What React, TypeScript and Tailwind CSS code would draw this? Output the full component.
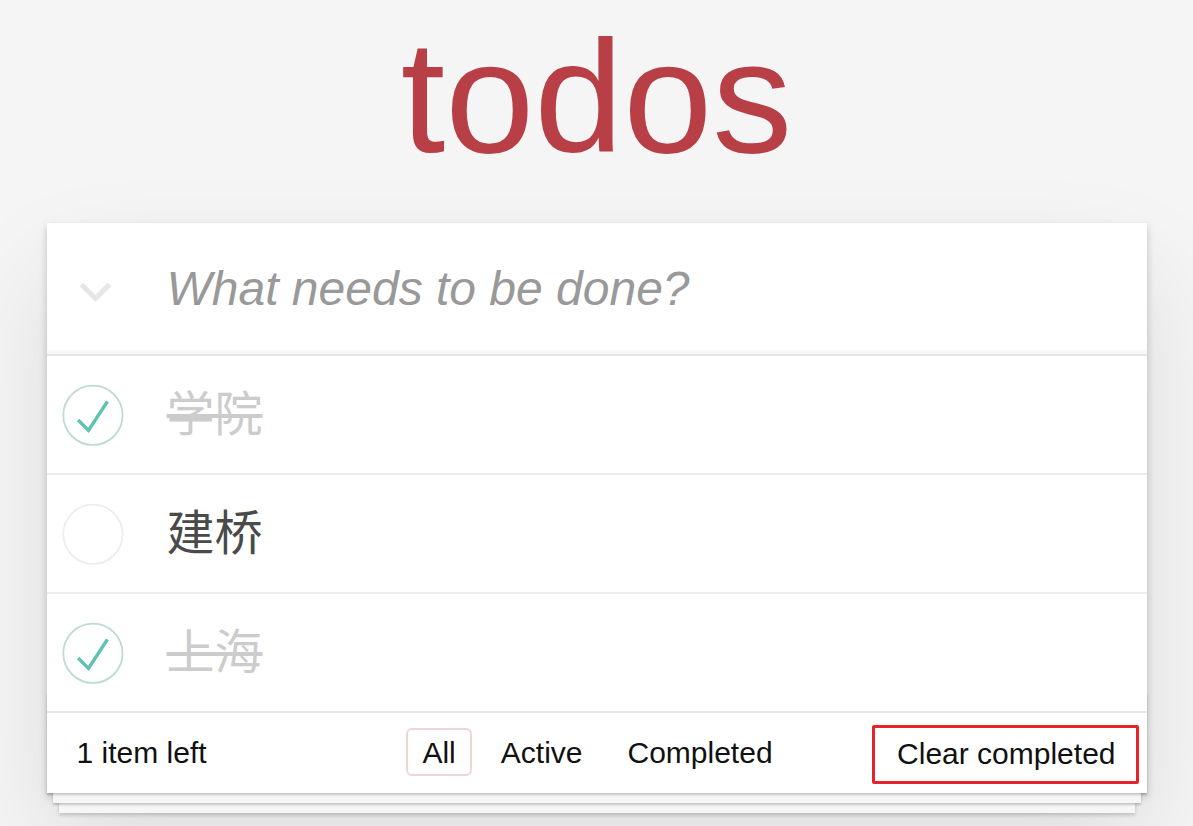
import { useState } from 'react'

type Todo = { id: number; title: string; completed: boolean }

const initialTodos: Todo[] = [
  { id: 1, title: '学院', completed: true },
  { id: 2, title: '建桥', completed: false },
  { id: 3, title: '上海', completed: true },
]

function Toggle({ done }: { done: boolean }) {
  return (
    <svg width="80" height="80" viewBox="-10 -18 100 135" className="shrink-0">
      <circle cx="50" cy="50" r="50" fill="none" stroke={done ? '#bddad5' : '#ededed'} strokeWidth="3" />
      {done && <path fill="#5dc2af" d="M72 25L42 71 27 56l-4 4 20 20 34-52z" />}
    </svg>
  )
}

export default function App() {
  const [todos, setTodos] = useState<Todo[]>(initialTodos)
  const [filter, setFilter] = useState('All')
  const left = todos.filter((t) => !t.completed).length

  const toggle = (id: number) =>
    setTodos((prev) => prev.map((t) => (t.id === id ? { ...t, completed: !t.completed } : t)))

  return (
    <div className="min-h-screen bg-[#f5f5f5] pt-[17px] font-['Liberation_Sans','Noto_Sans_CJK_SC',sans-serif]">
      <h1 className="h-[160px] text-center text-[160px] leading-[160px] font-extralight text-[#b83f45]">
        todos
      </h1>

      <section className="relative mx-auto mt-[46px] w-[1100px] bg-white shadow-[0_4px_8px_0_rgba(0,0,0,0.2),0_50px_100px_0_rgba(0,0,0,0.1)]">
        {/* new todo */}
        <div className="flex h-[131px] items-center shadow-[inset_0_-4px_2px_rgba(0,0,0,0.03)]">
          <div className="w-[120px] shrink-0 pl-[32px] pt-[7px]">
            <svg width="33" height="20" viewBox="0 0 33 20">
              <polyline points="2.5,2.5 16.5,16.5 30.5,2.5" fill="none" stroke="#e6e6e6" strokeWidth="5" />
            </svg>
          </div>
          <input
            placeholder="What needs to be done?"
            className="h-[67px] flex-1 bg-transparent pr-[32px] text-[48px] leading-[67px] text-[#4d4d4d] outline-none placeholder:italic placeholder:text-[#999]"
          />
        </div>

        {/* list */}
        <ul className="border-t-2 border-[#e6e6e6]">
          {todos.map((todo, i) => (
            <li
              key={todo.id}
              onClick={() => toggle(todo.id)}
              className={`flex items-center ${
                i === todos.length - 1 ? 'h-[117px]' : 'h-[119px] border-b-2 border-[#ededed]'
              }`}
            >
              <Toggle done={todo.completed} />
              <span
                className={`ml-[40px] text-[48px] leading-[58px] ${
                  todo.completed ? 'text-[#cccccc] line-through' : 'text-[#4a4a4a]'
                }`}
              >
                {todo.title}
              </span>
            </li>
          ))}
        </ul>

        {/* footer */}
        <footer className="relative grid h-[82px] grid-cols-[1fr_auto_1fr] items-center border-t-2 border-[#e6e6e6] px-[30px] pb-[2px] text-[30px] text-[#111]">
          <div className="pointer-events-none absolute inset-x-0 bottom-0 h-[100px] shadow-[0_2px_2px_rgba(0,0,0,0.2),0_16px_0_-6px_#f6f6f6,0_18px_2px_-6px_rgba(0,0,0,0.2),0_32px_0_-12px_#f6f6f6,0_34px_4px_-12px_rgba(0,0,0,0.2)]" />
          <span className="relative">
            {left} {left === 1 ? 'item' : 'items'} left
          </span>
          <ul className="relative ml-[2px] flex gap-[13px]">
            {['All', 'Active', 'Completed'].map((f) => (
              <li key={f}>
                <button
                  onClick={() => setFilter(f)}
                  className={`flex h-[48px] items-center rounded-[6px] border-2 px-[14px] ${
                    filter === f ? 'border-[rgba(175,47,47,0.2)]' : 'border-transparent'
                  }`}
                >
                  {f}
                </button>
              </li>
            ))}
          </ul>
          <div className="relative -mr-[22px] flex justify-end">
            <button
              onClick={() => setTodos((prev) => prev.filter((t) => !t.completed))}
              className="mt-[5px] flex h-[59px] items-center rounded-[2px] border-[3px] border-[#e8222b] pb-[2px] pl-[22px] pr-[20px]"
            >
              Clear completed
            </button>
          </div>
        </footer>
      </section>
    </div>
  )
}
